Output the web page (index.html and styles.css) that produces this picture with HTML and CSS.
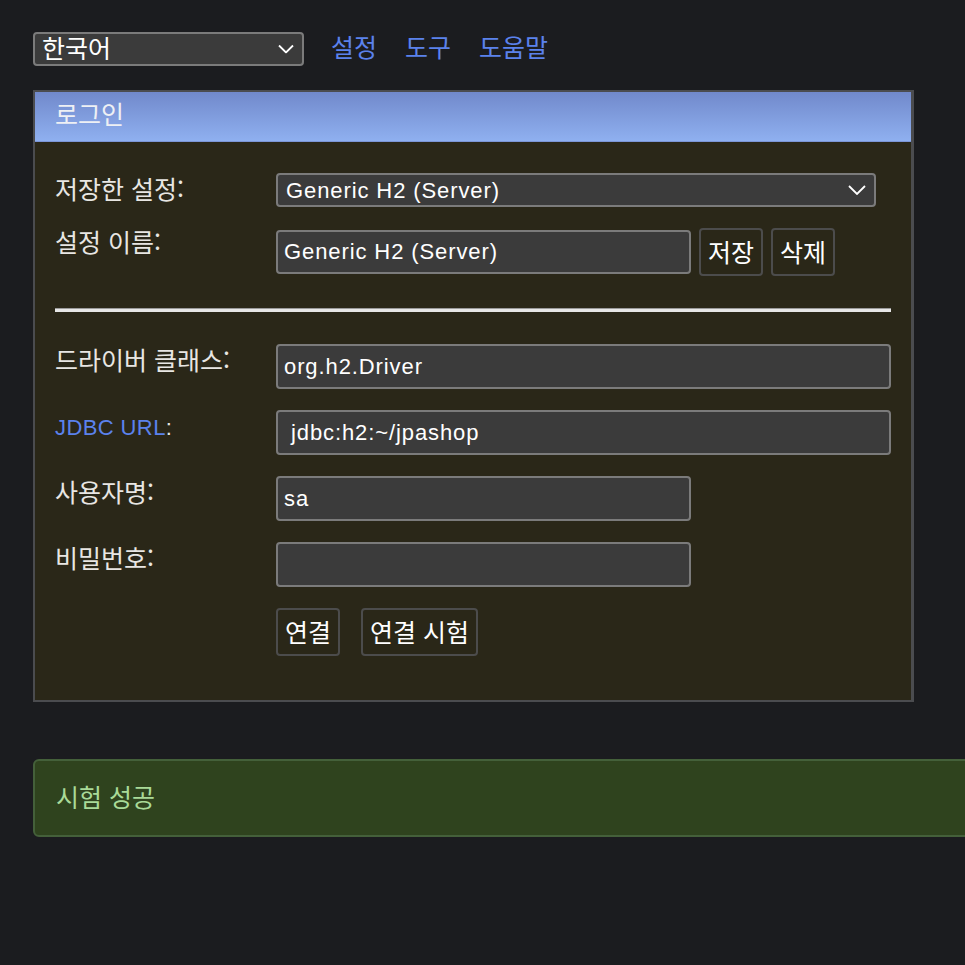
FILE: index.html
```html
<!DOCTYPE html>
<html lang="ko">
<head>
    <meta charset="UTF-8">
    <title>H2 Console</title>
    <link rel="stylesheet" href="styles.css">
</head>
<body>
    <div class="top-bar">
        <div class="select-wrap lang-select">
            <select class="field select ko">
                <option>한국어</option>
            </select>
            <svg class="chevron" width="16" height="9" viewBox="0 0 16 9"><path d="M1 1 L8 8 L15 1" fill="none" stroke="#fff" stroke-width="1.8"/></svg>
        </div>
        <a class="top-link ko" href="#">설정</a>
        <a class="top-link ko" href="#">도구</a>
        <a class="top-link ko" href="#">도움말</a>
    </div>

    <div class="login">
        <div class="login-head ko">로그인</div>
        <div class="login-body">
            <div class="row row-select">
                <div class="label ko">저장한 설정:</div>
                <div class="select-wrap saved-select">
                    <select class="field select">
                        <option>Generic H2 (Server)</option>
                    </select>
                    <svg class="chevron" width="18" height="10" viewBox="0 0 18 10"><path d="M1 1 L9 9 L17 1" fill="none" stroke="#fff" stroke-width="1.8"/></svg>
                </div>
            </div>
            <div class="row row-name">
                <div class="label ko">설정 이름:</div>
                <input class="field input short" type="text" value="Generic H2 (Server)">
                <button class="btn btn-side ko">저장</button>
                <button class="btn ko">삭제</button>
            </div>

            <hr class="divider">

            <div class="row">
                <div class="label ko">드라이버 클래스:</div>
                <input class="field input wide" type="text" value="org.h2.Driver">
            </div>
            <div class="row">
                <div class="label label-latin"><a class="help-link" href="#">JDBC URL</a>:</div>
                <input class="field input wide" type="text" value=" jdbc:h2:~/jpashop">
            </div>
            <div class="row">
                <div class="label ko">사용자명:</div>
                <input class="field input short" type="text" value="sa">
            </div>
            <div class="row">
                <div class="label ko">비밀번호:</div>
                <input class="field input short" type="password" value="">
            </div>
            <div class="row row-actions">
                <div class="label"></div>
                <button class="btn ko">연결</button>
                <button class="btn btn-test ko">연결 시험</button>
            </div>
        </div>
    </div>

    <div class="result ko">시험 성공</div>
</body>
</html>
```

FILE: styles.css
```css
* {
    box-sizing: border-box;
}

body {
    margin: 0;
    padding: 32px 0 0 33px;
    background-color: #1b1c1f;
    color: #e8e6e3;
    font-family: "Liberation Sans", "Noto Sans CJK KR", sans-serif;
    font-size: 22px;
    letter-spacing: 0.9px;
    overflow: hidden;
}

/* korean text is drawn bigger, like the original font */
.ko {
    font-family: "Noto Sans CJK KR", "Liberation Sans", sans-serif;
    font-size: 25px;
    letter-spacing: 0;
}

.top-bar {
    display: flex;
    align-items: flex-start;
    height: 34px;
}

.top-link {
    color: #5b82ec;
    text-decoration: none;
    margin-left: 27px;
    line-height: 28px;
}

.top-link + .top-link {
    margin-left: 28px;
}

.select-wrap {
    position: relative;
}

.chevron {
    position: absolute;
    right: 10px;
    top: 50%;
    transform: translateY(-50%);
    pointer-events: none;
}

.field {
    font-family: inherit;
    font-size: 22px;
    letter-spacing: inherit;
    color: #fff;
    background-color: #3b3b3b;
    border: 2px solid #7b7b7b;
    border-radius: 4px;
    outline: none;
}

.field.ko {
    font-family: "Noto Sans CJK KR", "Liberation Sans", sans-serif;
    font-size: 25px;
    letter-spacing: 0;
}

.select {
    appearance: none;
    -webkit-appearance: none;
    height: 34px;
    padding: 0 30px 0 8px;
    display: block;
}

.lang-select .select {
    width: 271px;
    padding-left: 7px;
    padding-bottom: 4px;
    line-height: 26px;
}

.saved-select .select {
    width: 600px;
}

.login {
    width: 881px;
    margin-top: 24px;
    border: 2px solid #4b4c4f;
    border-right-width: 3px;
    background-color: #2a2718;
}

.login-head {
    height: 50px;
    padding-left: 20px;
    line-height: 42px;
    background: linear-gradient(#7189cb, #8fb0f0);
    color: #eef0f4;
    border-bottom: 1px solid #7c96d6;
}

.login-body {
    padding: 31px 20px 44px 20px;
}

.row {
    display: flex;
    align-items: flex-start;
    height: 45px;
    margin-bottom: 21px;
}

.row-select {
    height: 34px;
    align-items: center;
}

.row-name {
    height: 48px;
    align-items: center;
}

.row-actions {
    height: 48px;
    margin-bottom: 0;
}

.label {
    width: 221px;
    flex-shrink: 0;
    padding-top: 0;
    line-height: 30px;
    color: #e8e6e3;
}

.label-latin {
    padding-top: 3px;
    letter-spacing: 0.4px;
}

.row-select .label {
    align-self: flex-start;
}

.row-name .label {
    align-self: flex-start;
    margin-top: -2px;
}

.help-link {
    color: #5b82ec;
    text-decoration: none;
}

.input {
    height: 45px;
    padding: 0 6px;
}

.row-name .input {
    height: 44px;
}

.input.short {
    width: 415px;
}

.input.wide {
    width: 615px;
}

.divider {
    border: none;
    border-top: 1px solid #9a9a9a;
    height: 4px;
    background-color: #e6e6e6;
    margin: 32px 0 32px 0;
}

.btn {
    color: #fff;
    background-color: transparent;
    border: 2px solid #4c4c4c;
    border-radius: 4px;
    height: 48px;
    padding: 0 7px 2px 7px;
    margin-right: 8px;
}

.btn-side {
    margin-left: 8px;
}

.btn-test {
    margin-left: 13px;
}

.result {
    width: 960px;
    height: 78px;
    margin-top: 57px;
    padding-left: 21px;
    line-height: 70px;
    background-color: #2f431e;
    border: 2px solid #44603a;
    border-radius: 6px;
    color: #a9da98;
}
```
